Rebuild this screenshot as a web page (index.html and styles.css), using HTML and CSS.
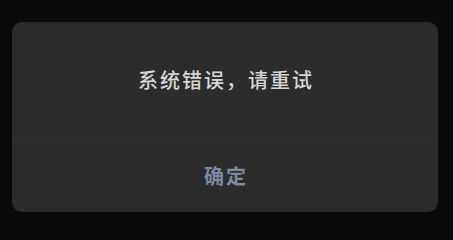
FILE: index.html
```html
<!DOCTYPE html>
<html lang="zh-CN">
<head>
<meta charset="utf-8">
<link rel="stylesheet" href="styles.css">
</head>
<body>
<div class="dialog">
  <div class="dialog-body">
    <p class="message">系统错误，请重试</p>
  </div>
  <div class="dialog-footer">
    <button class="confirm">确定</button>
  </div>
</div>
</body>
</html>
```

FILE: styles.css
```css
html, body {
  margin: 0;
  padding: 0;
  background: #0a0a0a;
  width: 453px;
  height: 225px;
  overflow: hidden;
}
body {
  box-sizing: border-box;
  padding: 22px 15px 13px 12px;
  font-family: "Noto Sans CJK SC", "Noto Sans", sans-serif;
}
.dialog {
  width: 426px;
  height: 190px;
  background: #2c2c2c;
  border-radius: 10px;
  display: flex;
  flex-direction: column;
  overflow: hidden;
}
.dialog-body {
  height: 116px;
  display: flex;
  align-items: center;
  justify-content: center;
  border-bottom: 1px solid #323232;
}
.message {
  margin: 0;
  padding-left: 2px;
  font-size: 20px;
  line-height: 24px;
  letter-spacing: 2px;
  color: #d6d6d6;
  font-weight: 500;
}
.dialog-footer {
  flex: 1;
  display: flex;
  align-items: center;
  justify-content: center;
}
.confirm {
  background: none;
  border: none;
  padding: 0 0 0 2px;
  margin-top: 1px;
  font-family: "Noto Sans CJK SC", "Noto Sans", sans-serif;
  font-size: 20px;
  line-height: 24px;
  letter-spacing: 2px;
  font-weight: 700;
  color: #7b8aa2;
}
```
